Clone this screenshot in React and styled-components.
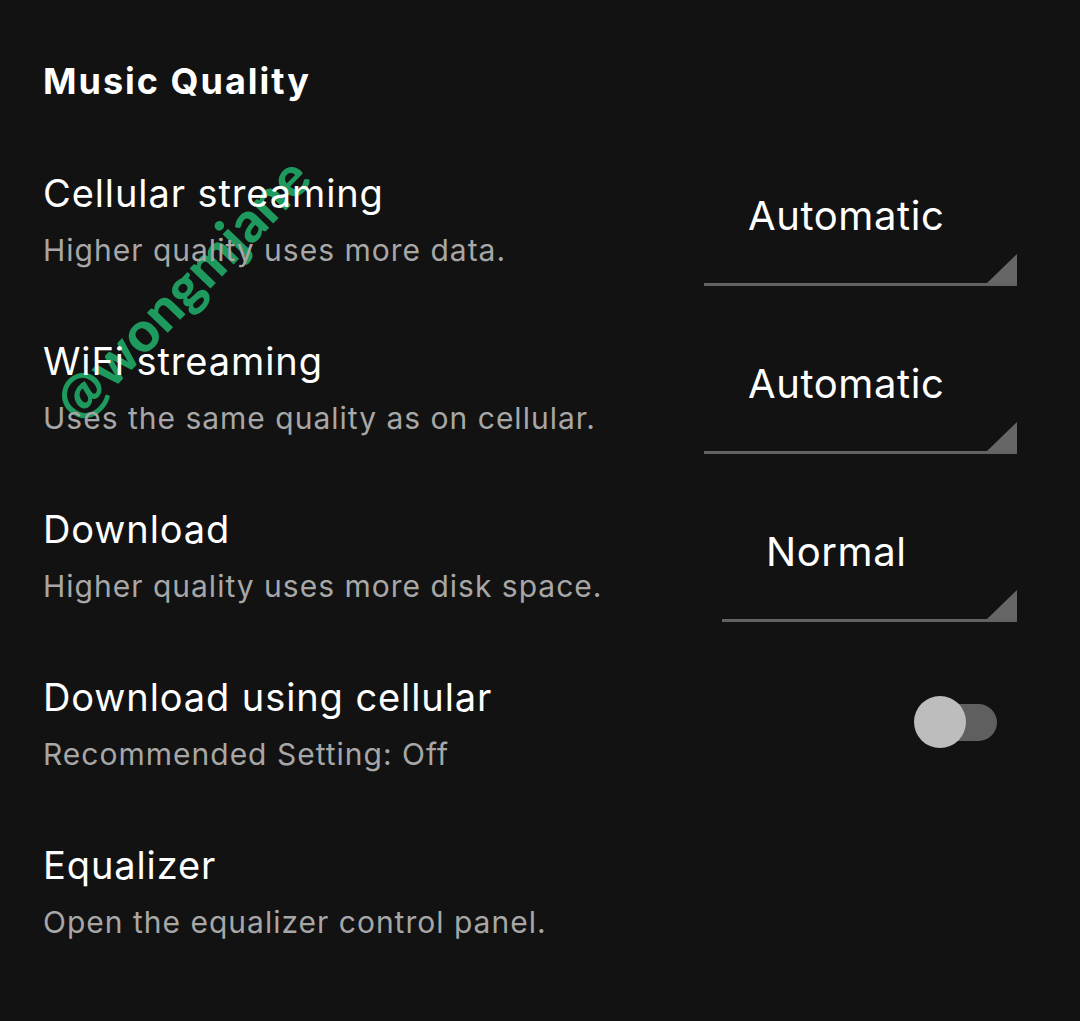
import React from "react"
import styled, { createGlobalStyle } from "styled-components"

const GlobalStyle = createGlobalStyle`
  html, body {
    margin: 0;
    padding: 0;
    background: #121212;
  }
  body {
    font-family: Inter, Lato, "Noto Sans", sans-serif;
    -webkit-font-smoothing: antialiased;
  }
`

const Page = styled.div`
  position: relative;
  width: 1080px;
  height: 1021px;
  box-sizing: border-box;
  padding: 59px 63px 0 43px;
  background: #121212;
  overflow: hidden;
`

const Heading = styled.h1`
  position: relative;
  z-index: 1;
  margin: 0 0 66px;
  font-size: 36px;
  line-height: 44px;
  font-weight: 700;
  letter-spacing: 2px;
  color: #ffffff;
`

const List = styled.div`
  position: relative;
  z-index: 1;
  display: flex;
  flex-direction: column;
  gap: 51px;
`

const Row = styled.div`
  display: flex;
  justify-content: space-between;
  align-items: flex-start;
  min-height: 117px;
`

const TextBlock = styled.div`
  display: flex;
  flex-direction: column;
  gap: 13px;
`

const Title = styled.div`
  font-size: 38px;
  line-height: 48px;
  letter-spacing: 0.9px;
  color: #ffffff;
`

const Subtitle = styled.div`
  font-size: 30px;
  line-height: 40px;
  letter-spacing: 1px;
  color: #a7a7a7;
`

const Spinner = styled.div`
  position: relative;
  box-sizing: border-box;
  width: ${(p) => p.$width}px;
  margin-top: 23px;
  padding: 0 0 43px ${(p) => p.$pad}px;
  border-bottom: 3px solid #626262;
  font-size: 40px;
  line-height: 48px;
  letter-spacing: 0.6px;
  color: #ffffff;

  &::after {
    content: "";
    position: absolute;
    right: 0;
    bottom: 0;
    width: 30px;
    height: 29px;
    background: #666666;
    clip-path: polygon(100% 0, 100% 100%, 0 100%);
  }
`

const Switch = styled.div`
  position: relative;
  width: 83px;
  height: 52px;
  margin: 23px 20px 0 0;
`

const Track = styled.div`
  position: absolute;
  right: 0;
  top: 8px;
  width: 74px;
  height: 37px;
  border-radius: 19px;
  background: #5f5f5f;
`

const Thumb = styled.div`
  position: absolute;
  left: 0;
  top: 0;
  width: 52px;
  height: 52px;
  border-radius: 50%;
  background: #bdbdbd;
`

const Watermark = styled.div`
  position: absolute;
  z-index: 0;
  left: 181px;
  top: 288px;
  transform: translate(-50%, -50%) rotate(-46deg);
  font-family: Lato, sans-serif;
  font-size: 56px;
  font-weight: 900;
  color: #1f9a5f;
  white-space: nowrap;
`

const rows = [
  { title: "Cellular streaming", sub: "Higher quality uses more data.", value: "Automatic", width: 313, pad: 44 },
  { title: "WiFi streaming", sub: "Uses the same quality as on cellular.", value: "Automatic", width: 313, pad: 44 },
  { title: "Download", sub: "Higher quality uses more disk space.", value: "Normal", width: 295, pad: 44 },
  { title: "Download using cellular", sub: "Recommended Setting: Off", toggle: true },
  { title: "Equalizer", sub: "Open the equalizer control panel." },
]

export default function App() {
  return (
    <>
      <GlobalStyle />
      <Page>
        <Watermark>@wongmjane</Watermark>
        <Heading>Music Quality</Heading>
        <List>
          {rows.map((r) => (
            <Row key={r.title}>
              <TextBlock>
                <Title>{r.title}</Title>
                <Subtitle>{r.sub}</Subtitle>
              </TextBlock>
              {r.value && (
                <Spinner $width={r.width} $pad={r.pad}>
                  {r.value}
                </Spinner>
              )}
              {r.toggle && (
                <Switch>
                  <Track />
                  <Thumb />
                </Switch>
              )}
            </Row>
          ))}
        </List>
      </Page>
    </>
  )
}
